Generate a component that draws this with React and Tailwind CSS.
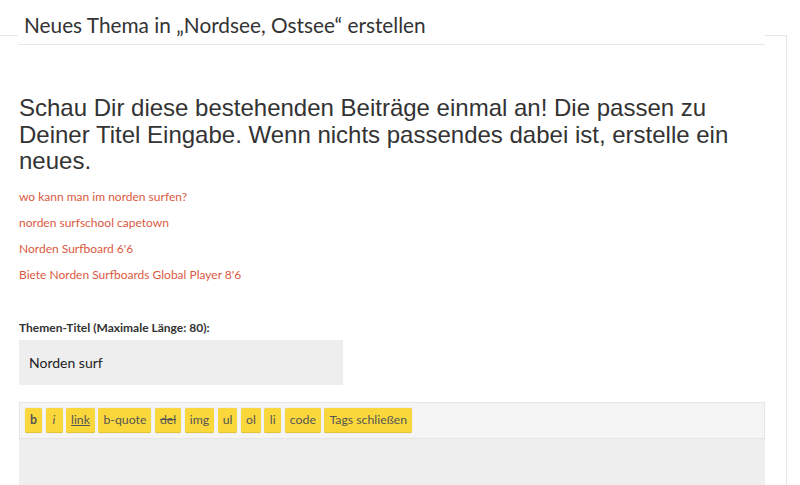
import React from "react";

const buttons = [
  { label: "b", cls: "font-bold" },
  { label: "i", cls: "italic" },
  { label: "link", cls: "underline" },
  { label: "b-quote", cls: "" },
  { label: "del", cls: "line-through" },
  { label: "img", cls: "" },
  { label: "ul", cls: "" },
  { label: "ol", cls: "" },
  { label: "li", cls: "" },
  { label: "code", cls: "" },
  { label: "Tags schließen", cls: "" },
];

const links = [
  "wo kann man im norden surfen?",
  "norden surfschool capetown",
  "Norden Surfboard 6'6",
  "Biete Norden Surfboards Global Player 8'6",
];

export default function App() {
  return (
    <div className="w-[800px] h-[485px] overflow-hidden bg-white font-['Lato',sans-serif] text-[#333]">
      <div className="pt-[35px]">
        <div className="w-[787px] border-t border-r border-[#e6e6e6] h-[460px]">
          <div className="-mt-[26px] ml-[18px] mr-[21px] bg-white border-b border-[#e6e6e6] pt-[3px] pb-[7px] px-[6px]">
            <h1 className="text-[20.8px] leading-[24px] text-[#333]">
              Neues Thema in „Nordsee, Ostsee“ erstellen
            </h1>
          </div>
          <div className="pl-[19px] pr-[21px]">
            <p className="mt-[50px] font-['Liberation_Sans',Arial,sans-serif] text-[24px] leading-[26.5px] text-[#333]">
              Schau Dir diese bestehenden Beiträge einmal an! Die passen zu Deiner Titel Eingabe. Wenn nichts passendes dabei ist, erstelle ein neues.
            </p>
            <ul className="mt-[9px]">
              {links.map((l) => (
                <li key={l} className="text-[12px] leading-[26px] text-[#da5a42]">
                  <a href="#">{l}</a>
                </li>
              ))}
            </ul>
            <label className="block mt-[33px] text-[12px] leading-[14px] font-bold text-[#333]">
              Themen-Titel (Maximale Länge: 80):
            </label>
            <div className="mt-[5px] w-[324px] h-[45px] bg-[#eeeeee] flex items-center px-[10px] text-[14px] text-[#222]">
              Norden surf
            </div>
            <div className="mt-[17px] border border-[#e6e6e6] bg-[#f5f5f5] px-[5px] py-[5px] flex gap-[3.5px]">
              {buttons.map((b) => (
                <span
                  key={b.label}
                  className={`h-[25px] min-w-[17px] px-[5px] pt-[1px] flex items-center justify-center rounded-[2px] bg-[#fad83c] border-b border-[#e3c435] shadow-[0_0_1px_rgba(0,0,0,0.25)] text-[12.3px] text-[#555] ${b.cls}`}
                >
                  {b.label}
                </span>
              ))}
            </div>
            <div className="h-[60px] bg-[#eeeeee]"></div>
          </div>
        </div>
      </div>
    </div>
  );
}
